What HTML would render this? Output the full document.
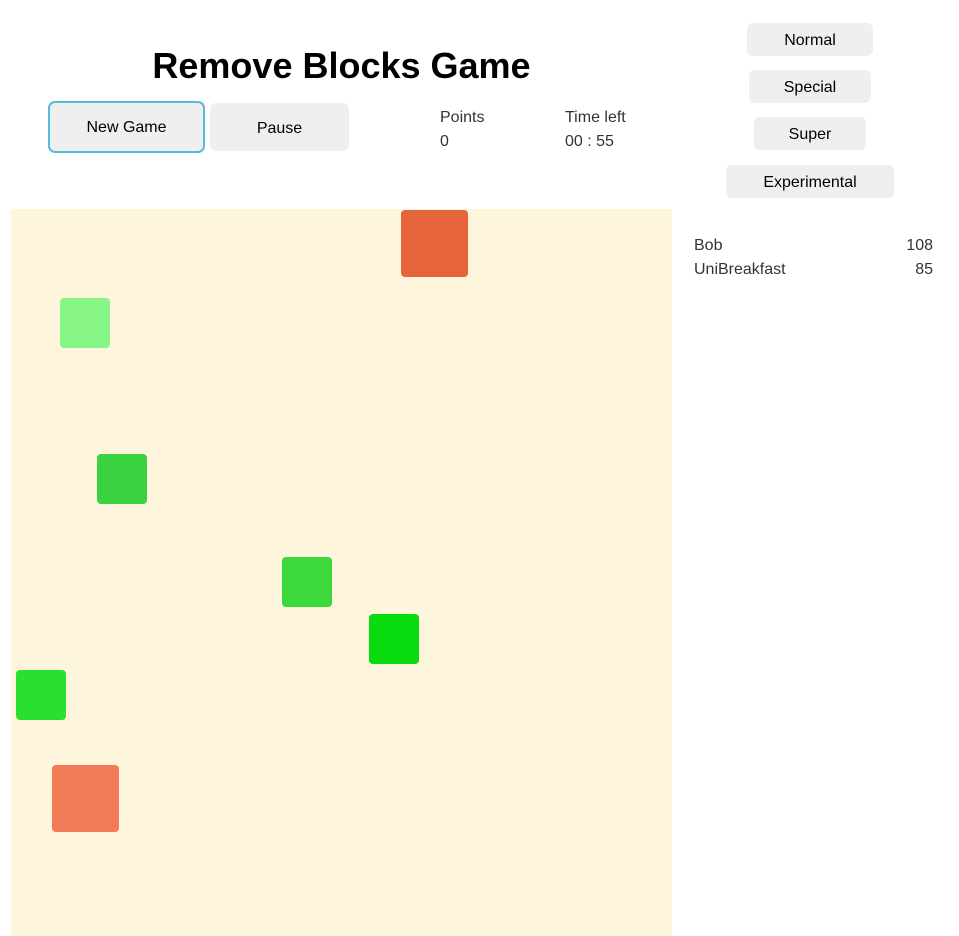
<!DOCTYPE html>
<html><head><meta charset="utf-8"><style>
body{margin:0;width:959px;height:936px;overflow:hidden;background:#fff;font-family:"Liberation Sans",sans-serif;position:relative}
h1{position:absolute;left:0;width:683px;top:42px;margin:0;text-align:center;font-size:36px;font-weight:bold;color:#000;line-height:48px}
.btn{position:absolute;background:#efefef;border-radius:6px;font-size:16px;color:#000;display:flex;align-items:center;justify-content:center;padding-top:3px;box-sizing:border-box}
.t{position:absolute;font-size:16px;color:#333;line-height:24px}
.board{position:absolute;left:11px;top:209px;width:661px;height:727px;background:#fef6dc}
.b{position:absolute;border-radius:4px}
</style></head><body>
<h1>Remove Blocks Game</h1>
<div class="btn" style="left:48px;top:101px;width:157px;height:52px;border:2px solid #56bbd8;border-radius:7px;padding-top:2px">New Game</div>
<div class="btn" style="left:210px;top:103px;width:139px;height:48px">Pause</div>
<div class="t" style="left:440px;top:106px">Points<br>0</div>
<div class="t" style="left:565px;top:106px">Time left<br>00 : 55</div>
<div class="btn" style="left:747px;top:23px;width:126px;height:33px">Normal</div>
<div class="btn" style="left:749px;top:70px;width:122px;height:33px">Special</div>
<div class="btn" style="left:754px;top:117px;width:112px;height:33px">Super</div>
<div class="btn" style="left:726px;top:165px;width:168px;height:33px">Experimental</div>
<div class="t" style="left:694px;top:234px">Bob<br>UniBreakfast</div>
<div class="t" style="left:880px;top:234px;width:53px;text-align:right">108<br>85</div>
<div class="board"></div>
<div class="b" style="left:401px;top:210px;width:67px;height:67px;background:#e5643a"></div>
<div class="b" style="left:60px;top:298px;width:50px;height:50px;background:#86f585"></div>
<div class="b" style="left:97px;top:454px;width:50px;height:50px;background:#3bd13f"></div>
<div class="b" style="left:282px;top:557px;width:50px;height:50px;background:#3bd93d"></div>
<div class="b" style="left:369px;top:614px;width:50px;height:50px;background:#08dc0e"></div>
<div class="b" style="left:16px;top:670px;width:50px;height:50px;background:#2ae02e"></div>
<div class="b" style="left:52px;top:765px;width:67px;height:67px;background:#f07b56"></div>
</body></html>
